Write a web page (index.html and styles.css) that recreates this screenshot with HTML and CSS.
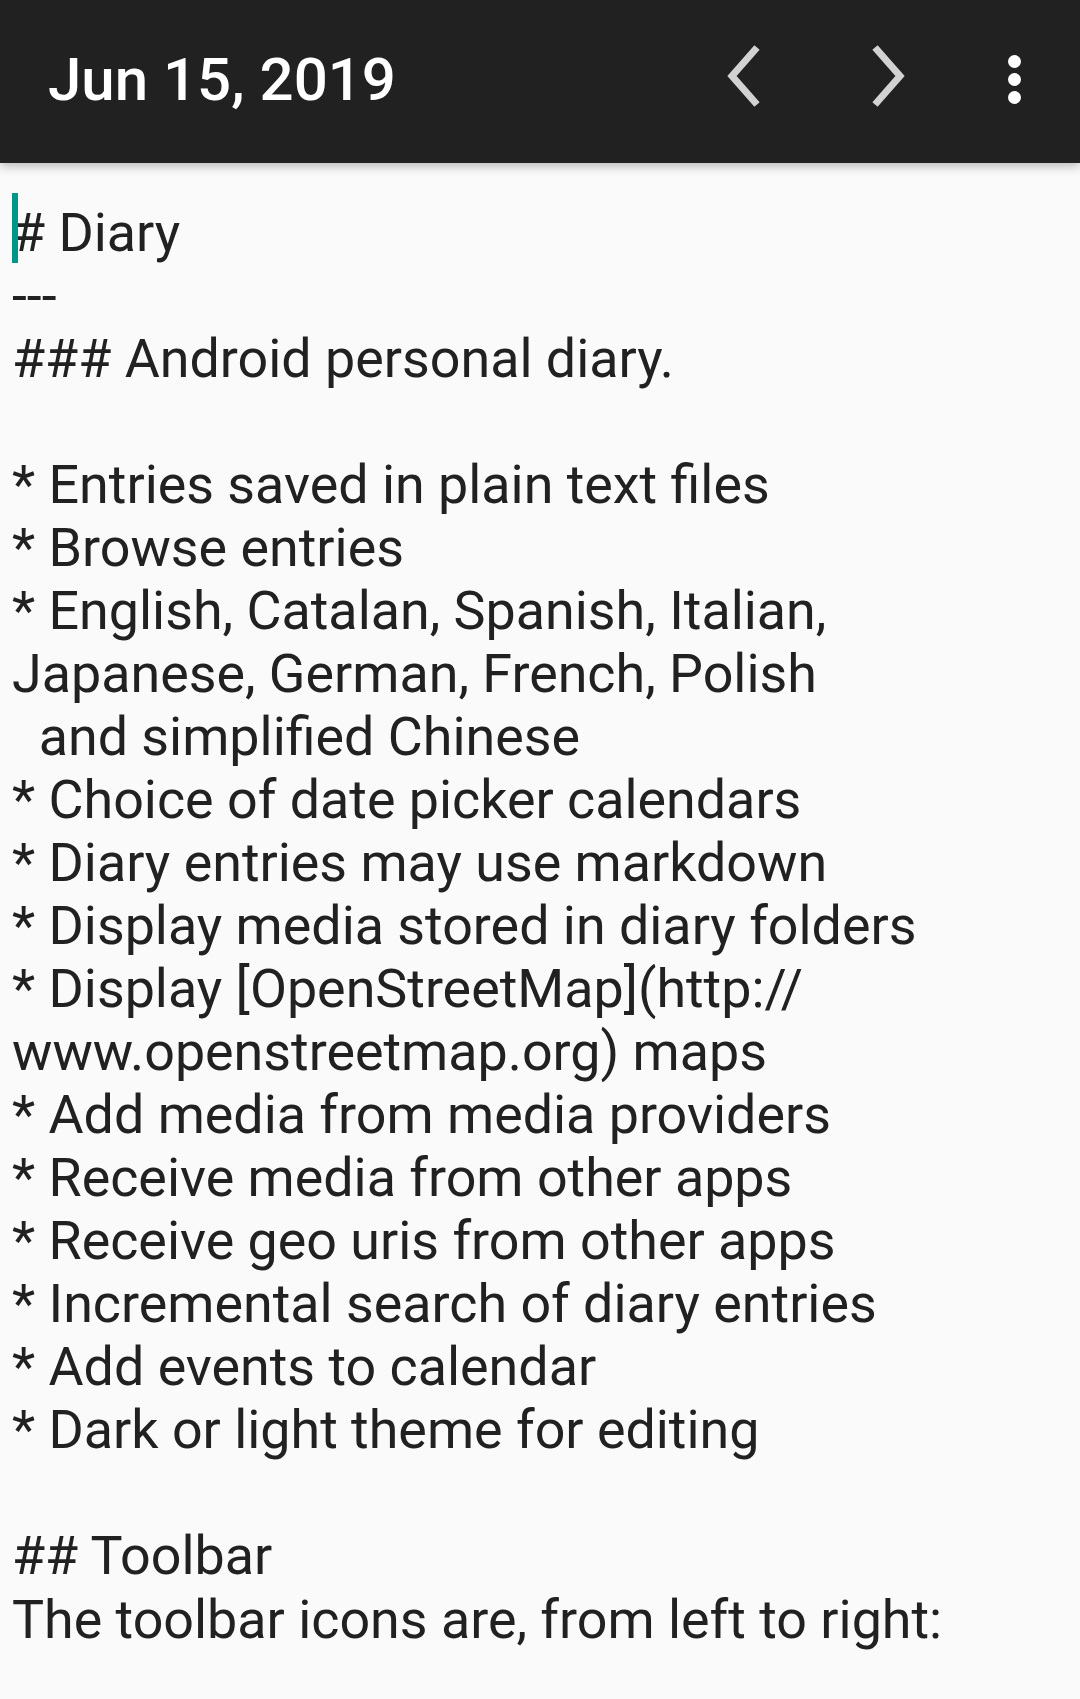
FILE: index.html
```html
<!DOCTYPE html>
<html>
<head>
<meta charset="utf-8">
<link rel="stylesheet" href="styles.css">
</head>
<body>
<div class="app">
  <header class="toolbar">
    <h1 class="title">Jun 15, 2019</h1>
    <div class="actions">
      <button class="action nav" aria-label="Previous">
        <svg width="40" height="70" viewBox="0 0 40 70"><polyline points="33,3.5 8,32 33,60.5" fill="none" stroke="#d2d2d2" stroke-width="7" stroke-linejoin="miter"/></svg>
      </button>
      <button class="action nav" aria-label="Next">
        <svg width="40" height="70" viewBox="0 0 40 70"><polyline points="7,3.5 32,32 7,60.5" fill="none" stroke="#d2d2d2" stroke-width="7" stroke-linejoin="miter"/></svg>
      </button>
      <button class="action overflow" aria-label="More options">
        <span class="dot"></span><span class="dot"></span><span class="dot"></span>
      </button>
    </div>
  </header>
  <main class="editor-wrap">
    <span class="cursor"></span>
    <div class="editor"># Diary
---
### Android personal diary.

* Entries saved in plain text files
* Browse entries
* English, Catalan, Spanish, Italian,
Japanese, German, French, Polish
  and simplified Chinese
* Choice of date picker calendars
* Diary entries may use markdown
* Display media stored in diary folders
* Display [OpenStreetMap](http://
www.openstreetmap.org) maps
* Add media from media providers
* Receive media from other apps
* Receive geo uris from other apps
* Incremental search of diary entries
* Add events to calendar
* Dark or light theme for editing

## Toolbar
The toolbar icons are, from left to right:</div>
  </main>
</div>
</body>
</html>
```
FILE: styles.css
```css
html, body {
  margin: 0;
  padding: 0;
  background: #fafafa;
}
body {
  width: 1080px;
  height: 1699px;
  overflow: hidden;
  font-family: Roboto, "Noto Sans", sans-serif;
}
.app {
  display: flex;
  flex-direction: column;
  height: 100%;
}
.toolbar {
  position: relative;
  z-index: 2;
  height: 163px;
  box-sizing: border-box;
  padding: 0 12px 5px 48px;
  background: #212121;
  display: flex;
  align-items: center;
  box-shadow: 0 3px 10px rgba(0, 0, 0, 0.28);
}
.title {
  margin: 0;
  color: #ffffff;
  font-weight: 500;
  font-size: 60px;
  letter-spacing: 0;
  flex: 1;
  line-height: 1;
  padding-top: 2px;
}
.actions {
  display: flex;
  align-items: center;
  height: 100%;
}
.action {
  border: 0;
  padding: 0;
  margin: 0;
  background: transparent;
  height: 100%;
  display: flex;
  align-items: center;
  justify-content: center;
}
.nav {
  width: 144px;
}
.nav svg {
  display: block;
}
.overflow {
  width: 108px;
  flex-direction: column;
  gap: 5px;
}
.dot {
  width: 13px;
  height: 13px;
  border-radius: 50%;
  background: #ffffff;
}
.editor-wrap {
  position: relative;
  flex: 1;
  padding: 37.5px 0 0 12px;
}
.editor {
  white-space: pre;
  color: #212121;
  font-size: 53.8px;
  line-height: 63.05px;
}
.cursor {
  position: absolute;
  left: 12px;
  top: 30px;
  width: 6px;
  height: 70px;
  background: #009688;
}
```
